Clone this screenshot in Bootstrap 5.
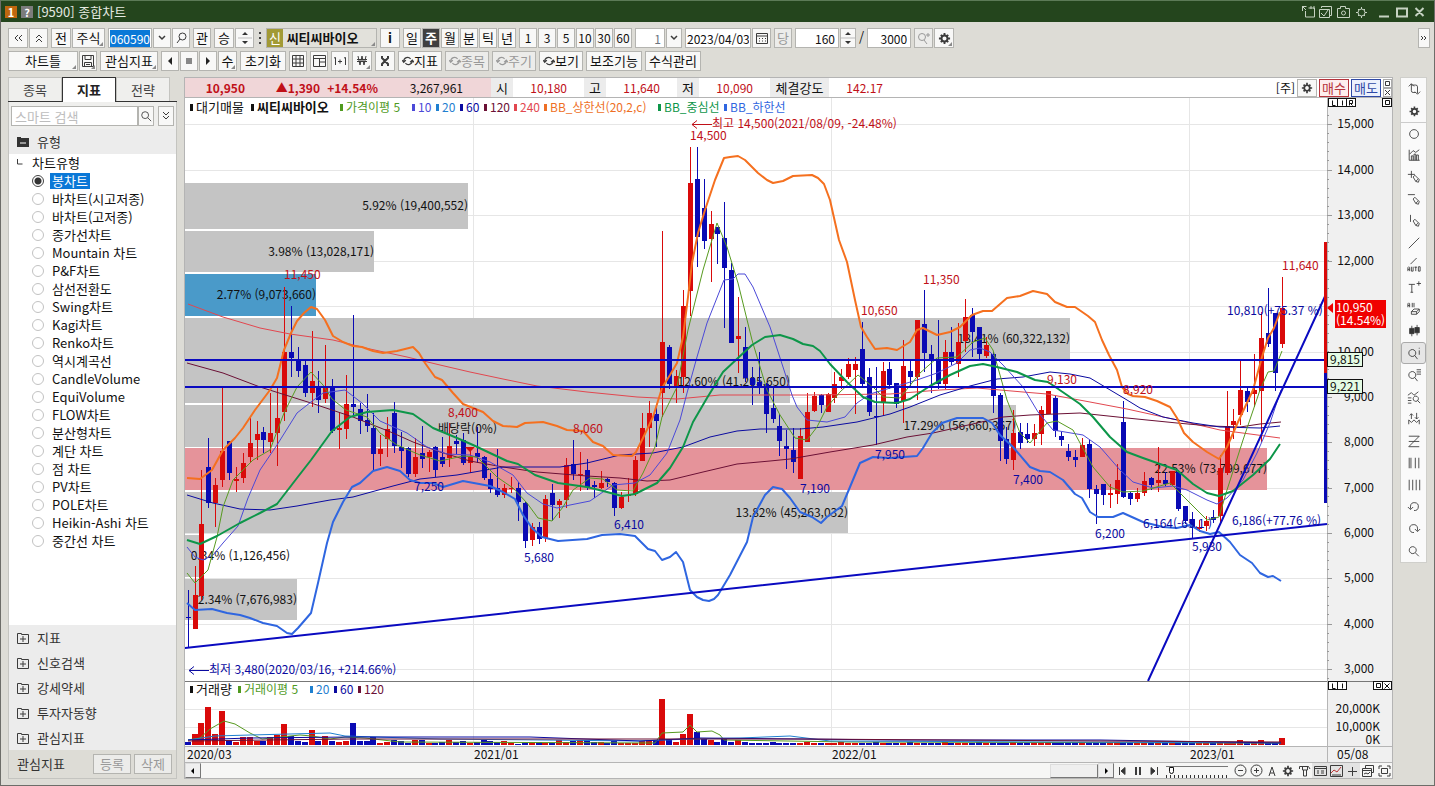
<!DOCTYPE html>
<html lang="ko">
<head>
<meta charset="utf-8">
<meta name="viewport" content="width=device-width, initial-scale=1">
<title>[9590] 종합차트</title>
<link rel="stylesheet" href="https://cdn.jsdelivr.net/npm/bootstrap@5.3.0/dist/css/bootstrap.min.css">
<style>
body{font-family:"Noto Sans CJK KR","Liberation Sans",sans-serif;font-size:13px;line-height:18px;color:#111;background:#dddcd6;border:1px solid #6d6d69;border-top-color:#5c7a57}
svg{display:block;flex:none}
.ic{fill:none;stroke:#3c3c3c;stroke-width:1}
.titlebar{height:21px;background:#24451d;color:#e4e9e1;font-size:13px}
.titlebar .ic{stroke:#c6d2c2}
.tag{width:12px;height:12px;font-size:11px;line-height:12px;text-align:center;font-weight:700;color:#fff}
.tag-1{background:#c0670f}.tag-q{background:#7c7c7c}
.tbar{padding:6px 0 0 7px;gap:3px}
.tbar2{padding:3px 0 0 7px;gap:3px}
.g1{gap:1px}
.tb{height:20px;padding:0;border:1px solid #b4b4b0;background:#f8f8f7;color:#111;font-size:13px;line-height:18px;position:relative;display:flex;align-items:center;justify-content:center;white-space:nowrap;overflow:hidden}
.tb:disabled{color:#999;background:#ececea}
.tb:disabled .ic{stroke:#999}
.tb.num{font-size:12px}
.corner::after{content:"";position:absolute;right:1px;bottom:1px;border:2px solid #8a8a8a;border-left-color:transparent;border-top-color:transparent}
.fld{height:20px;border:1px solid #b4b4b0;background:#fff;font-size:12px;line-height:18px;padding:0 3px;color:#111;border-radius:0;min-width:0}
.fld:focus{outline:0}
.fld::selection{background:#0a78d7;color:#fff}
.tight{padding:0 1px}
.dark{background:#404040;color:#fff;font-weight:700}
.stock{background:#e2e1db;font-weight:700;justify-content:flex-start}
.stockmark{width:16px;height:18px;background:#a29a35;color:#fff;text-align:center;font-weight:400}
.w12{width:12px}.w16{width:16px}.w18{width:18px}.w19{width:19px}.w20{width:20px}.w30{width:30px}.w33{width:33px}.w44{width:44px}.w46{width:46px}.w56{width:56px}.w58{width:58px}.w66{width:66px}.w70{width:70px}.w111{width:111px}
.work{padding:6px 7px 6px;gap:7px}
.side{width:169px;flex:none}
.side-in{border:1px solid #c4c4c0;background:#fff;font-size:13px}
.tabs{height:25px;border-bottom:1px solid #333}
.tabs button{height:24px;background:#efefed;border:1px solid #c4c4c0;border-bottom:0;color:#444;padding:0;font-size:13px;width:54px}
.tabs button.on{height:25px;background:#fff;border:1px solid #333;border-bottom:0;color:#222;font-weight:700}
.srch{padding:4px 2px 3px;background:#efefed}
.srch input{font-size:13px}
.srch input::placeholder{color:#bdbdbd}
.head{height:25px;background:#ececec;color:#333;padding-left:8px;gap:8px;border:0;width:100%}
.tree{height:18px;gap:6px;padding-left:23px}
.tree input{appearance:none;width:12px;height:12px;margin:0;border:1px solid #c2c2c2;border-radius:50%;background:#fff;flex:none}
.tree input:checked{border-color:#444;background:radial-gradient(circle,#333 0 3px,#fff 4px)}
.tree label{line-height:16px;padding:0 2px;white-space:nowrap}
.tree input:checked+label{background:#0a78d7;color:#fff}
.foot{height:28px;background:#dddcd6;color:#333;padding-left:8px;gap:3px}
.foot .tb{width:38px}
.mid{min-width:0;background:#fff;border:1px solid #b4b4b4}
.info{height:20px;border-bottom:1px solid #b4b4b4;font-size:12px;line-height:20px}
.pink{background:#f0d6d8;width:306px}
.pink>span,.rv{text-align:right;color:#c01018;font-weight:700}
.p1{width:60px}.p2{width:75px}.p3{width:58px}.p4{width:85px}
.pink>.p4{color:#111;font-weight:400}
.lab{width:22px;background:#ececec;text-align:center;font-size:13px}
.lab-l{width:59px}
.rv{width:54px;font-weight:400;padding:0}
.gap17{width:17px}
.order{gap:2px}
.buy{color:#b5333c;border-color:#b5333c;background:#fdeeee;width:30px}
.sell{color:#2f49a6;border-color:#2f49a6;background:#edf1fd;width:30px}
.tb18{height:18px;line-height:16px}
.tiny{width:9px;height:9px;padding:0;border:1px solid #aaa;background:#fff;display:block}
.chart{width:100%;height:auto;background:#fff}
.chart text{font-size:12px}
.chart .k{font-size:13px}
.scroll{height:15px;background:#f6f6f5}
.scroll .track{background:#f7f7f7}
.arrow{width:16px;height:15px;padding:0;border:1px solid #777;border-left-color:#ddd;border-top-color:#ddd;background:#efefef}
.thumb{width:48px;height:14px;border:1px solid #777;border-left-color:#ddd;border-top-color:#ddd;background:#efefef}
.ib{width:16px;height:15px;padding:0;border:0;background:transparent;display:flex;align-items:center;justify-content:center}
.ib.on{background:#e3e3e3}
.zoomer{width:62px;height:15px;appearance:none;margin:0 4px;background:repeating-linear-gradient(90deg,#333 0 1px,transparent 1px 4px) 0 100%/100% 3px no-repeat,linear-gradient(#777,#777) 0 3px/100% 1px no-repeat}
.zoomer::-webkit-slider-thumb{appearance:none;width:5px;height:7px;border:1px solid #111;border-radius:0 0 3px 3px;background:#fff}
.tools{width:27px;flex:none;background:#fafafa;border:1px solid #cfcfcb}
.tools button{width:100%;height:22px;padding:0;border:0;background:transparent;display:flex;align-items:center;justify-content:center}
.tools .sep{border-top:1px solid #ccc}
.tools .on{background:#e6e6e6;border:1px solid #aaa;border-radius:3px}
</style>
</head>
<body class="d-flex flex-column min-vh-100">
<svg width="0" height="0" class="position-absolute" aria-hidden="true"><defs>
<symbol id="gear" viewBox="0 0 14 14"><circle cx="7" cy="7" r="3.2" fill="none" stroke-width="2"/><path d="M7 1v3M7 10v3M1 7h3M10 7h3M3 3l2 2M9 9l2 2M3 11l2-2M9 5l2-2" stroke-width="2"/></symbol>
<symbol id="mag" viewBox="0 0 14 14"><circle cx="6" cy="6" r="4"/><path d="M9 9l4 4"/></symbol>
<symbol id="cyc" viewBox="0 0 14 14"><path d="M2 8V7a4.500 4.500 0 0 1 8-2.500M0 6l2 2.500L4.500 6M12 6v1a4.500 4.500 0 0 1-8 2.500M9.500 8.500L12 6l2 2.500" stroke-width="1.400"/></symbol>
<symbol id="plusbox" viewBox="0 0 12 12"><path d="M.5 1.500h4v1h7v9H.5zM3 7h6M6 4v6"/></symbol>
</defs></svg>

<header class="titlebar d-flex align-items-center">
 <div class="d-flex align-items-center gap-1 ps-1 flex-grow-1"><span class="tag tag-1">1</span><span class="tag tag-q">?</span><span>[9590] 종합차트</span></div>
 <svg class="ic" width="134" height="16" viewBox="1300 3 134 16"><path d="M1302.500 10V5.500h4M1302 5l4 4M1305.500 10v6h9v-9h-6M1311 5v3M1314 5v3M1321.500 7V5.500h10v9h-1.500M1319.500 8.500h10v8h-10zM1321 12l3 3 4-6M1337.500 7.500h3v-2h5v2h4v9h-12z"/><circle cx="1343.500" cy="12" r="2"/><circle cx="1361.500" cy="11.500" r="3.500"/><path d="M1361.500 6v2M1361.500 15v2M1356 11.500h2M1365 11.500h2M1358 8l1 1M1365 8l-1 1M1358 15l1-1M1365 15l-1-1"/><path d="M1379 15.500h10M1397 7.500h10v8h-10zM1415.500 7l8 8M1423.500 7l-8 8" stroke-width="2"/></svg>
</header>

<div class="tbar d-flex">
 <div class="d-flex g1"><button class="tb w20" aria-label="처음"><svg class="ic" width="10" height="10"><path d="M5 2L2 5l3 3M9 2L6 5l3 3"/></svg></button><button class="tb w19" aria-label="위로"><svg class="ic" width="10" height="10"><path d="M2 5l3-3 3 3M2 9l3-3 3 3"/></svg></button></div>
 <div class="d-flex g1"><button class="tb w20">전</button><button class="tb w33 corner">주식</button></div>
 <div class="d-flex g1"><input class="fld w44 tight" id="code" value="060590" aria-label="종목코드"><button class="tb w18" aria-label="목록"><svg class="ic" width="10" height="8"><path d="M2 2l3 3 3-3" stroke-width="1.500"/></svg></button><button class="tb w18" aria-label="검색"><svg class="ic" width="11" height="12"><circle cx="6.500" cy="4.500" r="3.500"/><path d="M4 7l-3 4"/></svg></button></div>
 <button class="tb w18">관</button>
 <div class="d-flex g1"><button class="tb w20">승</button><button class="tb w19" aria-label="증감"><svg width="14" height="16"><path d="M4 5l3-3 3 3zM4 11l3 3 3-3z" fill="#333"/><path d="M0 8h14" stroke="#bbb"/></svg></button></div>
 <svg width="6" height="20"><path d="M3 4v2M3 9v2M3 14v2" stroke="#444" stroke-width="2"/></svg>
 <button class="tb w111 stock corner"><span class="stockmark">신</span>&nbsp;씨티씨바이오</button>
 <button class="tb w20"><b>i</b></button>
 <div class="d-flex g1"><button class="tb w18">일</button><button class="tb w18 dark">주</button><button class="tb w18">월</button><button class="tb w18">분</button><button class="tb w18">틱</button><button class="tb w18">년</button></div>
 <div class="d-flex g1"><button class="tb w18 num">1</button><button class="tb w18 num">3</button><button class="tb w18 num">5</button><button class="tb w18 num">10</button><button class="tb w18 num">30</button><button class="tb w18 num">60</button></div>
 <div class="d-flex g1"><input class="fld w30 text-end text-secondary" value="1" disabled aria-label="주기"><button class="tb w16" aria-label="주기 목록"><svg class="ic" width="10" height="8"><path d="M2 2l3 3 3-3" stroke-width="1.500"/></svg></button></div>
 <div class="d-flex g1"><input class="fld w66 tight" value="2023/04/03" aria-label="날짜"><button class="tb w19" aria-label="달력"><svg class="ic" width="12" height="12"><path d="M.5 1.500h11v10H.5zM.5 4h11M3 6.500h1M6 6.500h1M9 6.500h1M3 9h1M6 9h1M9 9h1"/></svg></button></div>
 <button class="tb w18" disabled>당</button>
 <div class="d-flex g1"><input class="fld w44 text-end" value="160" aria-label="봉 개수"><button class="tb w16" aria-label="개수 증감"><svg width="14" height="16"><path d="M4 5l3-3 3 3zM4 11l3 3 3-3z" fill="#333"/><path d="M0 8h14" stroke="#bbb"/></svg></button></div>
 <span>/</span>
 <input class="fld w44 text-end" value="3000" aria-label="전체 개수">
 <div class="d-flex g1"><button class="tb w19" disabled aria-label="확대"><svg class="ic" width="14" height="14"><circle cx="5" cy="6" r="3.500"/><path d="M7 9l3 4M9 4h4M11 2v4"/></svg></button><button class="tb w20 corner" aria-label="설정"><svg class="ic" width="13" height="13"><use href="#gear"/></svg></button></div>
 <button class="tb ms-auto me-1 w12" aria-label="더보기"><svg class="ic" width="10" height="10"><path d="M2 3l2 2-2 2M5 3l2 2-2 2"/></svg></button>
</div>

<div class="tbar2 d-flex">
 <div class="d-flex g1"><button class="tb w70 corner">차트틀</button><button class="tb w18 corner" aria-label="저장"><svg class="ic" width="12" height="12"><path d="M.5.5h11v11H.5zM3 .5v4h6v-4M2.500 11V7.500h7V11M4 9.500h4"/></svg></button></div>
 <button class="tb w58 corner">관심지표</button>
 <div class="d-flex g1"><button class="tb w18" aria-label="이전"><svg width="8" height="8"><path d="M6 0v8L2 4z" fill="#222"/></svg></button><button class="tb w18" aria-label="정지"><svg width="6" height="6"><path d="M0 0h6v6H0z" fill="#888"/></svg></button><button class="tb w18" aria-label="다음"><svg width="8" height="8"><path d="M2 0v8l4-4z" fill="#222"/></svg></button><button class="tb w19 corner">수</button></div>
 <button class="tb w46">초기화</button>
 <button class="tb w18" aria-label="격자"><svg class="ic" width="12" height="12"><path d="M.5.5h11v11H.5zM0 4h12M0 8h12M4 0v12M8 0v12"/></svg></button>
 <button class="tb w18" aria-label="분할"><svg class="ic" width="13" height="12"><path d="M.5.5h12v11H.5zM.5 3.500h12M6.500 3.500v8M6.500 7h6"/></svg></button>
 <button class="tb w18" aria-label="1+1"><svg class="ic" width="14" height="10"><path d="M1 2l1.500-.5V9M5 5.500h4M7 3.500v4M11 2l1.500-.5V9"/></svg></button>
 <button class="tb w20 corner" aria-label="원화"><svg class="ic" width="10" height="12"><path d="M1 1l2 9 2-9 2 9 2-9M0 4.500h10M0 6.500h10"/></svg></button>
 <button class="tb w20" aria-label="도구"><svg class="ic" width="10" height="12"><path d="M2 1v2l6 6v2M8 1v2L2 9v2" stroke-width="2"/></svg></button>
 <button class="tb w44"><svg class="ic" width="12" height="12"><use href="#cyc"/></svg>지표</button>
 <button class="tb w44" disabled><svg class="ic" width="12" height="12"><use href="#cyc"/></svg>종목</button>
 <button class="tb w44" disabled><svg class="ic" width="12" height="12"><use href="#cyc"/></svg>주기</button>
 <button class="tb w44"><svg class="ic" width="12" height="12"><use href="#cyc"/></svg>보기</button>
 <button class="tb w56">보조기능</button>
 <button class="tb w56">수식관리</button>
</div>

<main class="work d-flex flex-grow-1">
 <aside class="side d-flex flex-column">
  <div class="tabs d-flex"><button>종목</button><button class="on">지표</button><button>전략</button></div>
  <div class="side-in d-flex flex-column flex-grow-1 border-top-0">
   <div class="srch d-flex"><input class="fld flex-grow-1" placeholder="스마트 검색" aria-label="스마트 검색"><button class="tb w19 me-1" aria-label="찾기"><svg class="ic" width="12" height="12"><use href="#mag"/></svg></button><button class="tb w19" aria-label="펼치기"><svg class="ic" width="10" height="10"><path d="M2 1l3 3 3-3M2 5l3 3 3-3"/></svg></button></div>
   <button class="head d-flex align-items-center"><svg width="12" height="12"><path d="M0 1h4v1h8v9H0z" fill="#333"/><path d="M3 7h6" stroke="#fff"/></svg>유형</button>
   <div class="flex-grow-1" id="tree"><div class="d-flex align-items-center"><svg class="ic" width="23" height="12"><path d="M8.500 2v5h5"/></svg>차트유형</div></div>
   <button class="head d-flex align-items-center"><svg class="ic" width="12" height="12"><use href="#plusbox"/></svg>지표</button>
   <button class="head d-flex align-items-center"><svg class="ic" width="12" height="12"><use href="#plusbox"/></svg>신호검색</button>
   <button class="head d-flex align-items-center"><svg class="ic" width="12" height="12"><use href="#plusbox"/></svg>강세약세</button>
   <button class="head d-flex align-items-center"><svg class="ic" width="12" height="12"><use href="#plusbox"/></svg>투자자동향</button>
   <button class="head d-flex align-items-center"><svg class="ic" width="12" height="12"><use href="#plusbox"/></svg>관심지표</button>
   <div class="foot d-flex align-items-center"><span class="me-auto">관심지표</span><button class="tb" disabled>등록</button><button class="tb me-1" disabled>삭제</button></div>
  </div>
 </aside>

 <section class="mid flex-grow-1 d-flex flex-column">
  <div class="info d-flex">
   <div class="pink d-flex"><span class="p1">10,950</span><span class="p2">▲1,390</span><span class="p3">+14.54%</span><span class="p4">3,267,961</span></div>
   <span class="lab">시</span><span class="rv">10,180</span><span class="gap17"></span>
   <span class="lab">고</span><span class="rv">11,640</span><span class="gap17"></span>
   <span class="lab">저</span><span class="rv">10,090</span><span class="gap17"></span>
   <span class="lab lab-l">체결강도</span><span class="rv">142.17</span>
   <div class="d-flex align-items-center ms-auto order"><span>[주]</span><button class="tb tb18 w20" aria-label="주문 설정"><svg class="ic" width="12" height="12"><use href="#gear"/></svg></button><button class="tb tb18 buy">매수</button><button class="tb tb18 sell">매도</button><div><button class="tiny" aria-label="최대화"><svg class="ic" width="7" height="7"><path d="M1.500 1.500h4v4h-4z"/></svg></button><button class="tiny" aria-label="닫기"><svg class="ic" width="7" height="7"><path d="M1 1l5 5M6 1L1 6"/></svg></button></div></div>
  </div>
  <svg class="chart" id="chart" viewBox="185 98 1207 665" role="img" aria-label="씨티씨바이오 주봉 차트"></svg>
  <div class="scroll d-flex align-items-center">
   <button class="arrow" aria-label="왼쪽"><svg width="14" height="12"><path d="M8 3v6L5 6z"/></svg></button>
   <div class="track flex-grow-1"></div><div class="thumb"></div>
   <button class="arrow" aria-label="오른쪽"><svg width="14" height="12"><path d="M6 3v6l3-3z"/></svg></button>
   <button class="ib" aria-label="처음"><svg class="ic" width="12" height="10"><path d="M3.500 1v8"/><path d="M9 1.500v7L5 5z" fill="#333"/></svg></button>
   <button class="ib" aria-label="일시정지"><svg class="ic" width="12" height="10"><path d="M4 1v8M8 1v8" stroke-width="2"/></svg></button>
   <button class="ib" aria-label="끝"><svg class="ic" width="12" height="10"><path d="M9.500 1v8"/><path d="M3 1.500v7L7 5z" fill="#333"/></svg></button>
   <input type="range" class="zoomer" value="5" aria-label="배율">
   <button class="ib" aria-label="축소"><svg class="ic" width="13" height="13"><circle cx="6.500" cy="6.500" r="5.500"/><path d="M4 6.500h5"/></svg></button>
   <button class="ib" aria-label="확대"><svg class="ic" width="13" height="13"><circle cx="6.500" cy="6.500" r="5.500"/><path d="M4 6.500h5M6.500 4v5"/></svg></button>
   <button class="ib" aria-label="자동"><svg class="ic" width="12" height="12"><path d="M3 11l3-9 3 9M4 8h4"/></svg></button>
   <button class="ib" aria-label="설정"><svg class="ic" width="12" height="12"><use href="#gear"/></svg></button>
   <button class="ib" aria-label="도구"><svg class="ic" width="13" height="13"><path d="M1.500 5V2.500h9L12 5M4.500 3v3h5V3M5.500 6v6h3V6"/></svg></button>
   <button class="ib on" aria-label="목록"><svg class="ic" width="13" height="12"><path d="M.5 1.500h12v9H.5zM.5 3.500h12M3 6h2M3 8h2M7 6h3M7 8h3"/></svg></button>
   <button class="ib on" aria-label="차트"><svg class="ic" width="13" height="12"><path d="M.5.5h12v11H.5zM2 10h9"/><path d="M1 8l3-3 3 2 4-5" stroke="#b33"/></svg></button>
   <button class="ib on" aria-label="십자선"><svg class="ic" width="12" height="12"><path d="M2 6.500h9M6.500 2v9"/></svg></button>
   <button class="ib" aria-label="창"><svg class="ic" width="13" height="12"><path d="M3.500 3V.5h8v7H10M.5 3.500h9v8h-9zM.5 5.500h9M2 9l2-1 2 1 2-2"/></svg></button>
   <button class="ib" aria-label="전체화면"><svg class="ic" width="13" height="12"><path d="M1 4V1h3M9 1h3v3M12 8v3H9M4 11H1V8M3.500 3.500h6v5h-6z"/></svg></button>
  </div>
 </section>

 <nav class="tools align-self-start" id="tools" aria-label="그리기 도구"></nav>
</main>

<script src="https://cdn.jsdelivr.net/npm/bootstrap@5.3.0/dist/js/bootstrap.bundle.min.js"></script>
<script>
const kinds = ['봉차트','바차트(시고저종)','바차트(고저종)','종가선차트','Mountain 차트','P&amp;F차트','삼선전환도','Swing차트','Kagi차트','Renko차트','역시계곡선','CandleVolume','EquiVolume','FLOW차트','분산형차트','계단 차트','점 차트','PV차트','POLE차트','Heikin-Ashi 차트','중간선 차트'];
document.getElementById('tree').insertAdjacentHTML('beforeend', kinds.map((k, i) =>
  `<div class="tree d-flex align-items-center"><input type="radio" name="kind" id="k${i}"${i ? '' : ' checked'}><label for="k${i}">${k}</label></div>`).join(''));

const pen = 'M7 8l2-2 5 5-1 3-3-1zM10 13l3-3';
const tools = [
 ['새로고침','M2 5l3-3 3 3M5 2v8a2 2 0 0 0 2 2h3M6 3.500h4a2 2 0 0 1 2 2V13M9 11l3 3 3-3'],
 ['설정','gear'],
 ['원','M8 3a5 5 0 1 0 .1 0z'],
 ['지표차트','M2.500 2v12h12M5 14v-5h2v5M8 14V7h2v7M11 14v-6h2v6M3 7l4-4 3 2 4-3'],
 ['추가','M1 5h8M5 1v8'+pen],
 ['수평선','M1 3h8'+pen],
 ['수직선','M4 1v8'+pen],
 ['추세선','M2 14L14 2'],
 ['자동추세선','M4 7l7-7M1 15v-4l1-1 1 1v4M1 13h2M5 10v5h2v-5M8.500 10.500h3M10 10v5M13 10h2v5h-2z'],
 ['글자','M2 5h7M5.500 5v9M4 14h3M11 4h5M13.500 1.500v5'],
 ['모두 지우기','M1 6V2l1-1 1 1v4M1 4h2M6 1v5M8 1v5M5 11l3-3h6l-3 3zM5 11v3h6v-3M11 14l3-3V8'],
 ['봉','bars'],
 ['정보 확대','M6 4a4 4 0 1 0 .1 0zM9 11l3 4M14 5v5M14 2v1'],
 ['목록 확대','M6 4a4 4 0 1 0 .1 0zM9 11l3 4M11 2h5M11 4.500h5M11 7h5'],
 ['차트 검색','M1 6l4-3 3 3 5-4M1 9h4M1 12h4M1 15h4M10 7a3 3 0 1 0 .1 0zM12 12l3 3'],
 ['파동','M2 14V9l3 3 3-3 3 3 3-3v5M5 2v6M3 4l2-2 2 2M11 1v7M9 6l2 2 2-2'],
 ['지그재그','M2 2.500h12M2 8.500h12M2 14.500h12M14 2.500l-12 12'],
 ['시간대','M2.500 2v12M4.500 2v12M9.500 2v12M13.500 2v12'],
 ['등간격','M2.500 2v12M6.500 2v12M10.500 2v12M14.500 2v12'],
 ['되돌리기','M4 10V7a4.500 4.500 0 1 1 4 5M1 8l3 3 3-3'],
 ['다시하기','M12 10V7a4.500 4.500 0 1 0-4 5M9 8l3 3 3-3'],
 ['돋보기','M6.500 3a4 4 0 1 0 .1 0zM9.500 10l4 4']];
document.getElementById('tools').innerHTML = tools.map(([n, d], i) => {
  const g = d === 'gear' ? '<use href="#gear" x="2" y="2" width="13" height="13"/>'
    : d === 'bars' ? '<path d="M5.500 2v12M11.500 1v12"/><path d="M3 5h5v6H3zM9 4h5v6H9z" fill="#333"/>' : `<path d="${d}"/>`;
  return `<button class="${i === 2 ? 'sep' : i === 12 ? 'on' : ''}" aria-label="${n}"><svg class="ic" width="14" height="14" viewBox="0 0 16 16">${g}</svg></button>`;
}).join('');

/* weekly bars: wick top, body top, body bottom, wick bottom, r(ise) or f(all) */
const bars = `590 617 618 647f 566 595 629 629r 470 524 596 600r 438 467 503 508f 478 485 503 527r 387 451 480 487r 441 441 473 480f 467 479 481 492r 453 463 478 483r 418 443 457 462r
421 434 440 460r 427 432 440 453f 393 433 442 453r 386 418 433 466r 287 352 412 421r 306 352 358 377f 347 359 371 377f 360 365 393 397f 331 381 393 407r 371 386 400 413f
345 387 399 403r 379 387 431 433f 413 428 430 449r 375 404 429 439r 315 404 407 417f 403 409 421 434f 394 420 426 432f 413 428 454 470f 435 449 454 466r 417 429 439 457r
402 413 446 453f 432 447 451 468f 447 448 474 477f 438 457 474 477r 426 453 459 468f 450 452 457 472r 446 447 470 477f 437 457 464 467f 423 446 458 467r 435 441 444 454f
433 440 463 465f 450 457 463 473r 427 453 457 463f 456 457 478 480f 473 479 489 493f 449 488 495 497f 484 488 495 498r 477 488 489 493r 482 488 502 521f 502 503 541 548f
523 527 540 546r 522 527 539 544f 495 499 538 542r 484 493 505 521f 499 501 505 518r 458 465 500 508r 440 464 474 480f 452 474 475 491r 459 470 487 490f 481 485 487 498f
471 483 488 489r 478 479 482 487f 482 483 508 516f 492 497 508 509r 478 495 496 502r 456 460 494 496r 413 428 461 461r 401 413 428 447r 407 414 421 447f 231 342 393 417r
345 347 384 389f 370 376 388 403r 290 306 377 393r 147 183 291 316r 147 179 237 267f 179 208 241 249f 211 224 239 282r 227 227 234 264f 202 238 268 328f 263 270 343 343f
297 336 339 373r 327 347 378 382f 367 378 385 405f 352 382 387 394f 383 384 414 433f 387 408 419 423f 414 426 441 456f 430 446 449 469f 428 450 462 473f 428 436 479 479r
393 412 442 442r 392 396 411 412r 394 395 405 413f 393 394 412 412r 372 384 398 403r 369 377 381 389r 358 364 377 379r 357 364 370 414r 322 349 384 387f 368 377 412 416f
367 416 417 445f 362 371 403 416r 362 369 385 389f 383 383 404 408f 340 366 401 423r 359 371 377 388f 320 320 377 400r 290 324 353 372f 345 354 360 393f 320 360 384 389f
340 352 384 389r 327 352 362 365f 323 342 364 377r 299 317 341 352r 308 315 332 357f 327 327 354 359f 337 345 356 358r 352 354 396 413f 393 395 441 461f 427 439 459 464f
410 433 460 470r 423 432 443 449f 423 434 439 443f 424 433 439 446r 406 410 434 445r 391 391 414 414r 396 398 431 437f 432 436 440 446f 444 451 457 461f 450 457 460 467f
438 445 457 457r 440 444 489 498f 485 489 494 524f 484 484 495 505f 484 493 495 508r 464 480 494 504r 401 422 497 498f 492 493 499 505f 488 493 499 502r 472 481 493 496r
477 478 485 490f 447 480 483 492r 472 480 484 486f 471 471 485 486r 470 472 509 511f 506 506 521 524f 512 519 527 539f 520 527 529 532r 516 521 526 531r 510 517 520 523f
455 468 516 523r 391 426 473 475r 409 421 425 439r 361 390 415 425r 388 391 402 412f 354 390 394 407r 312 338 391 442r 288 333 344 347f 313 313 373 391f 277 308 344 348r`
 .match(/\d+ \d+ \d+ \d+[rf]/g).map(s => [...s.slice(0, -1).split(' ').map(Number), s.slice(-1)]);
const vols = [3,11,22,38,11,34,4,3,8,8,4,4,8,10,21,9,4,3,15,4,9,4,3,4,22,4,4,8,2,3,5,4,2,5,5,2,2,3,5,3,4,2,3,5,4,3,4,2,1,2,3,3,2,2,5,3,4,5,5,3,3,2,4,2,2,2,4,5,4,46,6,3,11,31,13,6,5,3,6,3,5,3];
const lines = [
 ['#e2474f',1,'188,304 223,317 260,328 290,334 333,340 370,349 407,357 440,365 470,372 503,379 537,386 587,392 637,397 677,399 720,395 807,395 890,394 940,390 977,388 1023,392 1047,394 1090,402 1127,409 1177,420 1220,430 1280,438'],
 ['#6b1035',1,'187,363 223,373 260,387 311,403 353,417 393,433 413,442 440,452 470,461 503,467 537,472 587,476 620,478 647,481 670,480 703,472 737,464 770,461 790,459 830,452 873,445 907,437 933,433 977,423 1003,417 1030,415 1080,413 1127,418 1177,423 1210,426 1240,427 1260,424 1281,422'],
 ['#0a0aa0',1,'187,495 213,503 240,509 270,510 297,506 330,500 353,497 393,486 420,479 457,475 480,471 503,467 560,467 587,463 620,455 653,453 683,447 710,437 737,431 760,429 800,429 823,427 857,422 890,414 910,407 940,395 970,386 997,379 1023,377 1050,372 1070,374 1090,378 1127,400 1140,408 1163,417 1193,423 1220,427 1260,428 1280,426'],
 ['#4b49d8',1,'187,547 195,557 203,560 213,555 223,543 238,526 248,498 260,470 277,445 297,413 311,402 323,393 345,390 362,403 380,421 407,433 427,447 447,454 470,455 490,462 513,475 527,493 543,504 557,508 570,505 590,501 613,485 635,483 650,475 667,453 680,420 687,393 697,357 707,323 724,280 733,279 738,274 745,274 753,287 770,327 783,367 792,395 797,407 807,420 827,422 845,417 857,403 870,394 897,386 917,380 937,373 957,363 970,350 980,348 990,352 1003,365 1023,387 1038,412 1053,430 1083,435 1100,447 1120,470 1133,482 1153,488 1173,486 1187,490 1207,500 1217,504 1227,498 1243,480 1257,453 1270,423 1281,390'],
 ['#579a20',1,'187,573 195,583 208,570 217,537 223,507 233,480 253,460 270,450 284,413 297,387 311,372 323,385 332,399 346,410 367,417 380,433 397,445 420,455 440,461 463,456 477,457 497,477 513,488 527,503 538,518 552,521 563,507 573,490 590,478 603,479 617,490 633,491 643,473 655,447 662,417 677,387 688,330 703,270 717,223 727,247 738,283 752,340 767,390 780,415 795,438 807,440 817,427 827,407 840,392 858,375 873,387 883,397 900,398 920,373 937,358 957,357 973,342 985,338 993,350 1007,400 1020,433 1030,443 1047,423 1057,421 1073,430 1093,467 1110,487 1123,492 1143,491 1170,483 1187,500 1207,520 1219,517 1227,490 1243,440 1260,390 1268,372 1274,371 1282,351'],
 ['#f5701f',2,'187,478 200,479 212,470 223,450 235,438 243,428 255,410 270,390 277,378 284,350 291,333 297,321 304,313 311,307 317,309 325,320 333,336 343,342 353,346 362,347 373,351 383,353 397,351 413,347 419,353 425,363 435,377 442,380 453,393 463,404 473,408 483,412 493,421 503,426 517,427 525,423 543,422 557,426 567,430 583,431 593,442 603,446 613,455 632,456 636,452 642,440 653,417 662,388 670,375 677,363 683,337 688,297 692,263 698,233 705,210 715,180 724,158 730,157 738,156 745,160 752,167 758,173 767,180 773,183 783,181 793,176 812,175 818,178 824,184 830,200 839,240 847,262 855,300 861,327 867,337 875,349 887,348 897,350 910,342 917,330 923,328 937,335 950,332 960,327 972,315 983,311 992,311 1007,298 1020,296 1033,291 1047,294 1055,302 1067,307 1075,307 1088,316 1095,322 1102,340 1109,355 1117,370 1122,387 1128,394 1133,396 1145,397 1157,401 1170,407 1177,418 1184,433 1193,442 1207,452 1219,459 1227,447 1238,422 1253,390 1262,357 1268,338 1274,328 1280,312'],
 ['#0d9649',2,'187,540 200,544 217,536 240,523 260,513 277,504 297,478 311,460 332,431 350,417 367,412 393,410 413,414 433,428 457,438 473,445 490,453 507,461 518,464 535,475 558,483 587,487 607,492 622,496 635,494 657,483 670,468 683,447 693,422 707,398 723,372 738,358 752,345 765,337 780,335 793,339 803,344 813,346 820,351 830,364 847,382 863,397 875,402 897,403 910,399 930,386 950,375 970,366 983,364 997,367 1017,372 1035,380 1048,382 1067,395 1080,404 1093,417 1110,437 1127,452 1143,458 1177,470 1193,484 1207,493 1219,496 1233,491 1253,475 1270,459 1280,444'],
 ['#2f66e0',2,'187,603 195,610 212,609 227,613 240,615 250,618 263,623 277,626 287,633 292,634 298,628 311,613 318,583 327,543 333,522 343,502 352,487 360,483 373,471 387,467 400,471 410,480 420,483 433,483 443,487 463,481 490,486 503,492 515,499 523,515 532,528 542,537 558,541 587,539 602,535 620,534 635,536 648,549 655,551 662,560 670,557 676,552 683,562 690,590 697,597 703,600 709,601 714,599 718,595 730,575 747,542 753,517 765,495 773,487 782,489 790,498 800,512 812,517 821,523 827,517 842,506 850,487 860,463 873,457 890,458 917,456 923,448 932,433 942,423 957,418 983,418 992,423 1000,435 1013,447 1030,467 1040,471 1050,472 1063,480 1075,494 1082,498 1090,512 1098,517 1113,517 1123,513 1143,522 1163,527 1177,528 1190,525 1200,531 1210,534 1219,532 1230,542 1240,555 1252,563 1260,573 1268,577 1273,576 1281,581']];
const R = '#c01018', B = '#0a0aa0', K = '#111';
const rect = (x, y, w, h, f, s = '') => `<rect x="${x}" y="${y}" width="${w}" height="${h}" fill="${f}" ${s}/>`;
const text = (x, y, t, f = K, c = '', a = 'start') => `<text x="${x}" y="${y}" fill="${f}" class="${c}" text-anchor="${a}">${t}</text>`;
const path = (d, c, w = 1) => `<path d="${d}" fill="none" stroke="${c}" stroke-width="${w}"/>`;
const px = i => Math.round(187.700 + i * 6.880);
let s = '';
const grid = [124,170,215,261,306,352,397,442,488,533,578,624,669];
s += rect(1327, 98, 66, 648, '#f0f0f0') + rect(184, 746, 1209, 17, '#f0f0f0');
[...grid, 709, 727].forEach(y => s += path(`M184 ${y}.5H1327`, '#e6e6e6'));
[473, 831, 1189].forEach(x => s += path(`M${x}.5 98V746`, '#e6e6e6'));
[[183,229,468,'5.92% (19,400,552)',468],[231,272,374,'3.98% (13,028,171)',374],[274,316,316,'2.77% (9,073,660)',316],[318,360,1070,'18.41% (60,322,132)',1070],[361,403,790,'12.60% (41,205,650)',790],[405,447,1016,'17.29% (56,660,367)',1016],[448,490,1267,'22.53% (73,799,677)',1267],[492,533,848,'13.82% (45,263,032)',848],[535,577,200,'0.34% (1,126,456)',290],[579,620,297,'2.34% (7,676,983)',297]]
 .forEach(([a, b, x, t, e], i) => { s += rect(184, a, x - 184, b - a, i === 2 ? '#4a9ac9' : i === 6 ? '#e5939a' : '#c4c4c4'); s += text(e, (a + b) / 2 + 4, t, K, '', 'end'); });
s += text(438, 433, '배당락(0%)');
bars.forEach(([h, t, b, l, c], i) => { const f = c === 'r' ? '#d90a0a' : '#0a0ab4', x = px(i); s += rect(x, h, 1, Math.max(l - h, 1), f) + rect(x - 2, t, 5, Math.max(b - t, 1), f); });
lines.forEach(([c, w, p]) => s += `<polyline points="${p}" fill="none" stroke="${c}" stroke-width="${w}" stroke-linejoin="round"/>`);
s += '<path d="M465 447h10l-5 5z" fill="#d90a0a"/>';
s += path('M184 360H1327M184 387H1327M184 648L1327 524M1148 681L1327 292', '#0a0ac0', 2);
s += rect(1324, 242, 3, 131, '#d90a0a') + rect(1324, 373, 3, 130, '#0a0ab4');
[[284,279,'11,450'],[448,417,'8,400'],[573,433,'8,060'],[690,140,'14,500'],[861,315,'10,650'],[923,284,'11,350'],[1047,384,'9,130'],[1123,394,'8,920'],[1282,270,'11,640']].forEach(([x, y, t]) => s += text(x, y, t, R));
[[414,491,'7,250'],[524,562,'5,680'],[614,529,'6,410'],[800,493,'7,190'],[875,459,'7,950'],[1013,484,'7,400'],[1095,538,'6,200'],[1192,551,'5,930'],[1227,315,'10,810(+75.37 %)'],[1143,528,'6,164(-65.1 )'],[1232,525,'6,186(+77.76 %)']].forEach(([x, y, t]) => s += text(x, y, t, B));
s += path('M692 124.500h20M697 120.500l-5 4 5 4', R) + text(712, 128, '최고 14,500(2021/08/09, -24.48%)', R);
s += path('M189 670.500h20M194 666.500l-5 4 5 4', B) + text(209, 674, '최저 3,480(2020/03/16, +214.66%)', B);
const legend = (y, items) => items.forEach(([x, t, c, k]) => s += rect(x, y - 8, 3, 7, c) + `<text x="${x + 6}" y="${y}" fill="${c}" ${k ? 'font-weight="700"' : ''} class="${/^[가-힣]+$/.test(t) ? 'k' : ''}">${t}</text>`);
legend(112, [[190,'대기매물',K],[251,'씨티씨바이오',K,1],[340,'가격이평 5','#4f9a1e'],[412,'10','#4b49d8'],[436,'20','#1f80d0'],[460,'60','#0a0aa0'],[484,'120','#6b1035'],[514,'240','#e2474f'],[544,'BB_상한선(20,2,c)','#ee6f25'],[658,'BB_중심선','#0d9649'],[724,'BB_하한선','#2f66e0']]);
/* volume pane */
bars.forEach((b, i) => { const v = vols[i] || (i === 159 ? 7 : i > 150 && i % 3 === 0 ? 5 : i % 5 === 0 ? 3 : 2), c = b[4] === 'r' || i === 3 ? '#d90a0a' : '#0a0ab4'; s += rect(px(i) - 3, 745 - v, 6, v, c); });
s += path('M188 740 200 738 210 729 224 721 235 724 250 733 262 739 300 735 312 736 330 739 345 737 365 738 400 742 655 743 662 733 683 732 690 725 697 732 712 731 720 735 724 740 850 742 1281 743', '#579a20');
s += path('M188 740 215 736 250 735 330 733 345 736 440 739 640 741 690 739 740 738 790 736 830 741 1281 743', '#1f80d0');
s += path('M188 740 250 738 350 737 530 737 640 741 700 738 900 740 1100 740 1281 743', '#0a0aa0') + path('M188 741 350 739 560 739 800 739 1100 741 1281 742', '#6b1035');
s += path('M184 681.500H1393', '#777') + path('M184 746.500H1393M184 762.500H1393M1327.500 98V763', '#b5b5b5');
legend(694, [[190,'거래량',K],[238,'거래이평 5','#4f9a1e'],[310,'20','#1f80d0'],[334,'60','#0a0aa0'],[358,'120','#6b1035']]);
/* axes */
for (let y = 106; y < 680; y += 9.080) s += path(`M1327 ${Math.round(y)}.5h2`, '#999');
grid.forEach((y, i) => { s += path(`M1327 ${y}.5h5`, '#999'); if (i !== 4) s += text(1374, y + 4, (15 - i) + ',000', K, '', 'end'); });
[[713,'20,000K'],[731,'10,000K'],[744,'0K']].forEach(([y, t]) => s += text(1380, y, t, K, '', 'end'));
[[187,'2020/03'],[474,'2021/01'],[832,'2022/01'],[1190,'2023/01'],[1337,'05/08']].forEach(([x, t]) => s += text(x, 759, t));
s += '<path d="M1327 308l6-5v10z" fill="#f00000"/>' + rect(1335, 300, 51, 28, '#f00000') + text(1336, 312, '10,950', '#fff') + text(1336, 325, '(14.54%)', '#fff');
[[352,'9,815'],[379,'9,221']].forEach(([y, t]) => s += rect(1327.500, y + .5, 35, 14, '#e4fbe4', 'stroke="#111"') + text(1330, y + 12, t));
const mini = (x, y, d) => s += rect(x + .5, y + .5, 9, 8, '#fff', 'stroke="#111"') + path(`M${x}.5 ${y}.5${d}`, '#111');
mini(1328, 98, 'm4 2v5h3'); mini(1337, 98, 'm5 2v5'); mini(1346, 98, 'm3 7v-5h3v3h-3m1 0l2 2'); mini(1382, 98, 'm3 2h4v4h-4z');
mini(1328, 681, 'm4 2v5h3'); mini(1337, 681, 'm5 2v5'); mini(1373, 681, 'm3 2h4v4h-4z'); mini(1382, 681, 'm2 2l5 5m0-5l-5 5');
document.getElementById('chart').innerHTML = s;
const code = document.getElementById('code'); code.focus({preventScroll: true}); code.select();
</script>
</body>
</html>
